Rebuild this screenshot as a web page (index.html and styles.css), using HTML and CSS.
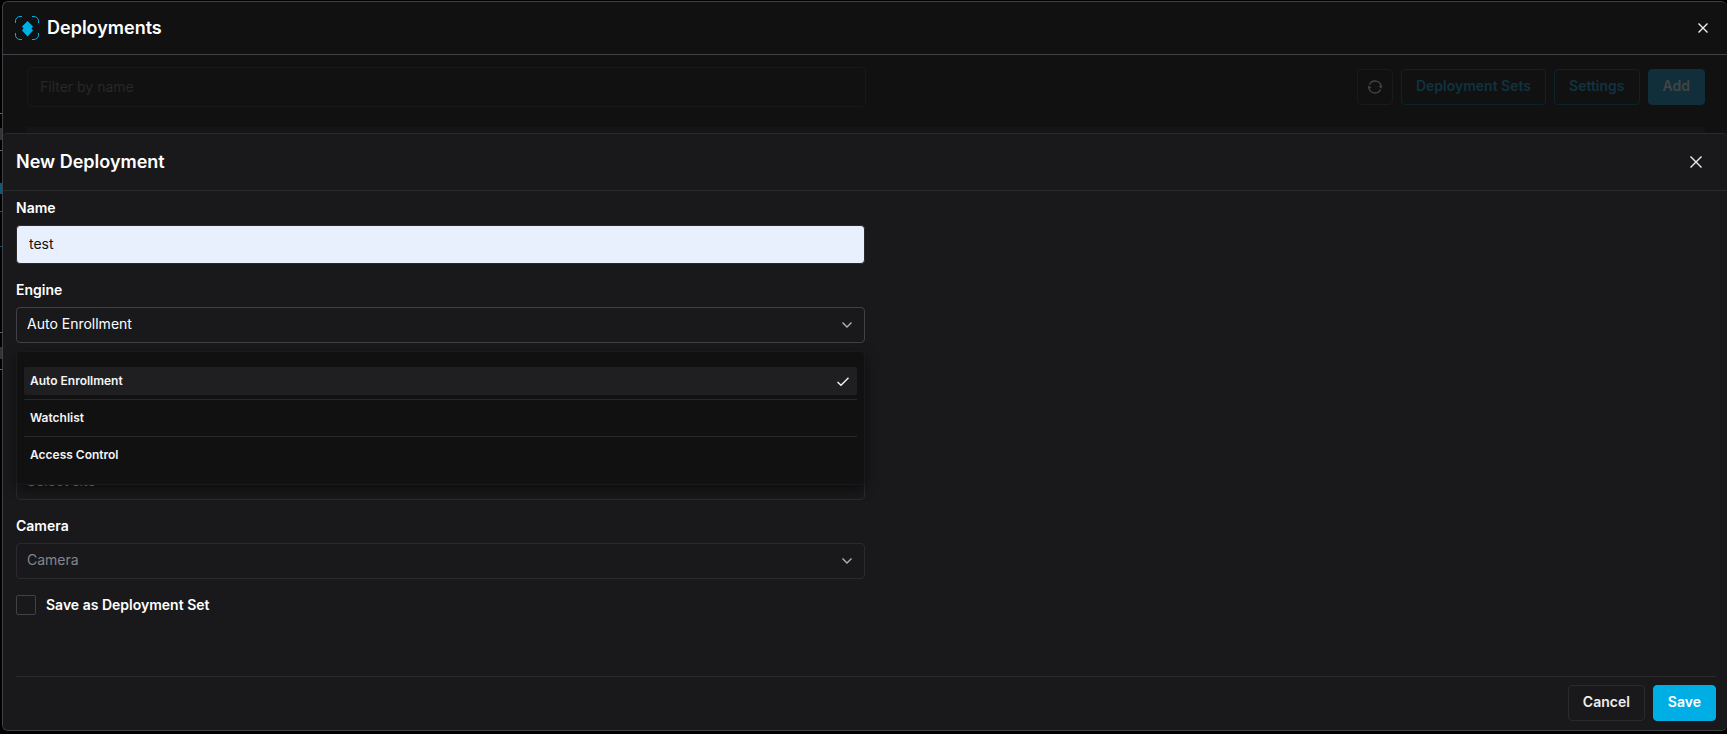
FILE: index.html
```
<!DOCTYPE html>
<html lang="en">
<head>
  <meta charset="UTF-8">
  <title>Deployments</title>
  <link rel="stylesheet" href="styles.css">
</head>
<body>

  <main class="window">
    <header class="window-header">
      <svg class="logo" viewBox="0 0 24 24" width="24" height="24">
        <path d="M.5 7V5A4.500 4.500 0 0 1 5 .5h2M17 .5h2A4.500 4.500 0 0 1 23.500 5v2M23.500 17v2a4.500 4.500 0 0 1-4.500 4.500h-2M7 23.500H5A4.500 4.500 0 0 1 .5 19v-2" fill="none" stroke="#00aee6"/>
        <path d="M12.500 5l5.500 5.500-1.500 2 1.500 2-5.500 6-5.500-6 1.500-2-1.500-2z" fill="#00aee6"/>
      </svg>
      <h1>Deployments</h1>
      <button class="close" aria-label="Close window">
        <svg viewBox="0 0 10 10" width="10" height="10"><path d="M.5.5l9 9M9.500.5l-9 9"/></svg>
      </button>
    </header>

    <section class="toolbar">
      <input type="text" class="filter" placeholder="Filter by name" aria-label="Filter by name">
      <div class="actions">
        <button class="btn btn-icon" aria-label="Refresh">
          <svg viewBox="0 0 16 16" width="16" height="16">
            <path d="M2.500 5.500A6.200 6.200 0 0 1 14.200 7.500M13.500 10.500A6.200 6.200 0 0 1 1.800 8.500"/>
            <path d="M.5 9.500l1.200-3.200L4.500 9zM15.500 6.500l-1.200 3.200L11.500 7z" class="solid"/>
          </svg>
        </button>
        <button class="btn btn-outline">Deployment Sets</button>
        <button class="btn btn-outline">Settings</button>
        <button class="btn btn-add">Add</button>
      </div>
    </section>
    <div class="list-head"></div>

    <form class="drawer">
      <header class="drawer-header">
        <h2>New Deployment</h2>
        <button type="button" class="close" aria-label="Close">
          <svg viewBox="0 0 12 12" width="12" height="12"><path d="M.5.5l11 11M11.500.5l-11 11"/></svg>
        </button>
      </header>

      <div class="fields">
        <div class="field">
          <label for="name">Name</label>
          <input type="text" id="name" class="text-input" value="test">
        </div>

        <div class="field">
          <label for="engine">Engine</label>
          <div class="select active">
            <select id="engine">
              <option>Auto Enrollment</option>
              <option>Watchlist</option>
              <option>Access Control</option>
            </select>
            <svg class="chevron" viewBox="0 0 10 6" width="10" height="6"><path d="M.5.5L5 5 9.500.5"/></svg>
            <ul class="menu">
              <li>
                <a href="#" class="selected">Auto Enrollment
                  <svg viewBox="0 0 12 9" width="12" height="9"><path d="M.5 5L4 8.200 11.500.7"/></svg>
                </a>
              </li>
              <li><a href="#">Watchlist</a></li>
              <li><a href="#">Access Control</a></li>
            </ul>
          </div>
        </div>

        <div class="select site">
          <select aria-label="Site">
            <option>Select site</option>
          </select>
          <svg class="chevron" viewBox="0 0 10 6" width="10" height="6"><path d="M.5.5L5 5 9.500.5"/></svg>
        </div>

        <div class="field">
          <label for="camera">Camera</label>
          <div class="select">
            <select id="camera">
              <option>Camera</option>
            </select>
            <svg class="chevron" viewBox="0 0 10 6" width="10" height="6"><path d="M.5.5L5 5 9.500.5"/></svg>
          </div>
        </div>

        <label class="check">
          <input type="checkbox">
          Save as Deployment Set
        </label>
      </div>

      <footer class="drawer-footer">
        <button type="button" class="btn btn-cancel">Cancel</button>
        <button type="button" class="btn btn-save">Save</button>
      </footer>
    </form>
  </main>

</body>
</html>
```

FILE: styles.css
```
* {
  box-sizing: border-box;
}

body {
  margin: 0;
  height: 100vh;
  padding: 1px 0 3px 2px;
  /* edge of the page behind the window */
  background:
    linear-gradient(#666, #666) 0 113px / 2px 1px no-repeat,
    linear-gradient(#333, #333) 0 128px / 2px 12px no-repeat,
    linear-gradient(#666, #666) 0 150px / 2px 1px no-repeat,
    linear-gradient(#005f7e, #005f7e) 0 183px / 2px 11px no-repeat,
    linear-gradient(#005f7e, #005f7e) 0 211px / 2px 1px no-repeat,
    linear-gradient(#005f7e, #005f7e) 0 246px / 2px 1px no-repeat,
    linear-gradient(#666, #666) 0 332px / 2px 1px no-repeat,
    linear-gradient(#333, #333) 0 347px / 2px 12px no-repeat,
    linear-gradient(#666, #666) 0 369px / 2px 1px no-repeat,
    #000;
  color: #fff;
  font-family: Inter, "Liberation Sans", sans-serif;
  font-size: 14px;
  line-height: 20px;
  overflow: hidden;
}

h1,
h2 {
  margin: 0;
  font-size: 18px;
  line-height: 24px;
  font-weight: 600;
}

button,
input,
select {
  font: inherit;
  color: inherit;
}

button {
  cursor: pointer;
}

svg {
  fill: none;
  stroke: currentColor;
  stroke-width: 1.4;
  overflow: visible;
}

.window {
  display: flex;
  flex-direction: column;
  height: 100%;
  background: #111;
  border: 1px solid #414146;
  border-right: none;
  border-radius: 6px;
  overflow: hidden;
}

.window-header {
  display: flex;
  align-items: center;
  gap: 8px;
  height: 53px;
  padding: 0 19px 0 12px;
  border-bottom: 1px solid #414146;
}

.logo {
  stroke: none;
  stroke-width: 1;
}

.close {
  display: flex;
  margin-left: auto;
  padding: 0;
  border: none;
  background: none;
  color: #f0f0f0;
}

.toolbar {
  display: flex;
  align-items: center;
  justify-content: space-between;
  padding: 12px 22px 20px 24px;
}

.filter {
  width: 50%;
  height: 40px;
  padding: 0 12px 2px;
  border: 1px solid #181818;
  border-radius: 4px;
  background: none;
}

.filter::placeholder {
  color: #282828;
}

.actions {
  display: flex;
  gap: 8px;
}

.btn {
  height: 36px;
  padding: 0 14px 2px;
  border: 1px solid #1a1a1a;
  border-radius: 4px;
  background: none;
  font-weight: 600;
}

.btn-icon {
  width: 36px;
  padding: 0 9px;
  color: #434343;
}

.btn-icon svg {
  display: block;
}

.btn-icon .solid {
  fill: currentColor;
  stroke: none;
}

.btn-outline {
  border-color: #0d232b;
  color: #10333f;
}

.btn-add {
  border-color: #102f3a;
  background: #102f3a;
  color: #444;
}

.list-head {
  height: 6px;
  margin: 0 22px 0 24px;
  background: #151516;
}

.drawer {
  display: flex;
  flex-direction: column;
  flex: 1;
  background: #19191b;
  border-top: 1px solid #2a2a2d;
  border-radius: 4px 4px 0 0;
}

.drawer-header {
  display: flex;
  align-items: center;
  height: 57px;
  padding: 0 25px 0 13px;
  border-bottom: 1px solid #2a2a2d;
}

.fields {
  display: flex;
  flex-direction: column;
  gap: 16px;
  width: 50%;
  padding: 7px 0 0 13px;
}

.field {
  display: flex;
  flex-direction: column;
  gap: 7px;
}

.field label,
.check {
  font-weight: 600;
}

.text-input {
  height: 39px;
  padding: 0 12px 2px;
  border: 1px solid #2a2a2d;
  border-radius: 4px;
  background: #e8effd;
  color: #111;
}

.select {
  position: relative;
  color: #85858c;
}

.select select {
  display: block;
  width: 100%;
  height: 36px;
  padding: 0 10px 2px;
  border: 1px solid #2a2a2d;
  border-radius: 4px;
  background: none;
  appearance: none;
}

.select.active select {
  border-color: #414146;
  color: #fff;
}

.chevron {
  position: absolute;
  bottom: 15px;
  right: 13px;
  color: #b0b0b8;
}

.menu {
  position: absolute;
  z-index: 10;
  top: 44px;
  left: 0;
  right: 0;
  margin: 0;
  padding: 11px 7px;
  list-style: none;
  background: #111;
  border: 1px solid #1a1a1b;
  border-radius: 4px;
  box-shadow: 0 4px 12px rgba(0, 0, 0, 0.5);
}

.menu li {
  padding: 4px 0;
}

.menu li + li {
  border-top: 1px solid #29292b;
}

.menu a {
  display: flex;
  align-items: center;
  justify-content: space-between;
  height: 28px;
  padding: 0 8px 0 6px;
  border-radius: 2px;
  color: #f4f4f4;
  font-size: 12px;
  font-weight: 600;
  text-decoration: none;
}

.menu .selected {
  background: #1f1f21;
}

.site {
  margin-top: 105px;
}

.check {
  display: flex;
  align-items: center;
  align-self: flex-start;
  gap: 10px;
}

.check input {
  width: 20px;
  height: 20px;
  margin: 0;
  border: 1px solid #414146;
  border-radius: 2px;
  appearance: none;
}

.drawer-footer {
  display: flex;
  justify-content: flex-end;
  gap: 8px;
  margin: auto 11px 0 13px;
  padding: 8px 0 9px;
  border-top: 1px solid #2a2a2d;
}

.btn-cancel {
  border-color: #2a2a2d;
  color: #eee;
}

.btn-save {
  border-color: #00aee6;
  background: #00aee6;
}
```
